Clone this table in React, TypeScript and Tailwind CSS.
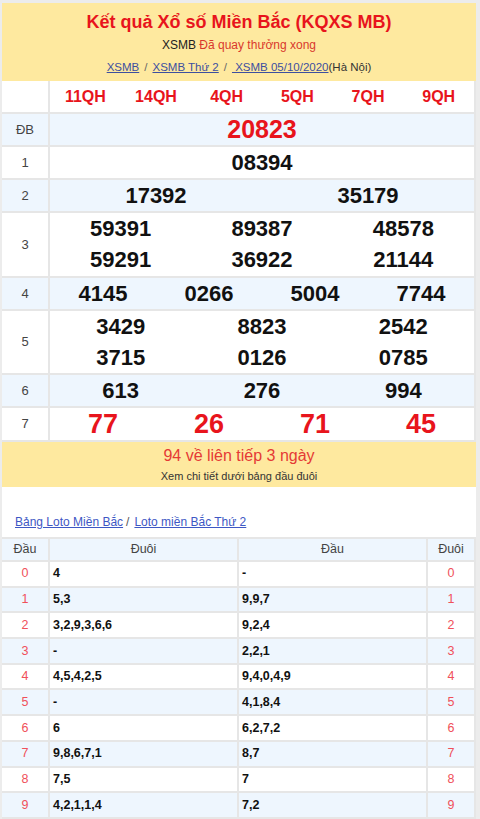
const font = { fontFamily: '"Liberation Sans", Arial, sans-serif' };

// ---------------------------------------------------------------------------
// Data
// ---------------------------------------------------------------------------

const provinces = ["11QH", "14QH", "4QH", "5QH", "7QH", "9QH"];

type Prize = { label: string; rows: string[][]; h: string; bg: string; kind?: "db" | "g7" };

const prizes: Prize[] = [
  { label: "ĐB", rows: [["20823"]], h: "h-[33px]", bg: "bg-[#eef6fe]", kind: "db" },
  { label: "1", rows: [["08394"]], h: "h-[33px]", bg: "bg-white" },
  { label: "2", rows: [["17392", "35179"]], h: "h-[33px]", bg: "bg-[#eef6fe]" },
  {
    label: "3",
    rows: [
      ["59391", "89387", "48578"],
      ["59291", "36922", "21144"],
    ],
    h: "h-[65px]",
    bg: "bg-white",
  },
  { label: "4", rows: [["4145", "0266", "5004", "7744"]], h: "h-[33px]", bg: "bg-[#eef6fe]" },
  {
    label: "5",
    rows: [
      ["3429", "8823", "2542"],
      ["3715", "0126", "0785"],
    ],
    h: "h-[64px]",
    bg: "bg-white",
  },
  { label: "6", rows: [["613", "276", "994"]], h: "h-[33px]", bg: "bg-[#eef6fe]" },
  { label: "7", rows: [["77", "26", "71", "45"]], h: "h-[34px]", bg: "bg-white", kind: "g7" },
];

const loto: [string, string, string][] = [
  ["0", "4", "-"],
  ["1", "5,3", "9,9,7"],
  ["2", "3,2,9,3,6,6", "9,2,4"],
  ["3", "-", "2,2,1"],
  ["4", "4,5,4,2,5", "9,4,0,4,9"],
  ["5", "-", "4,1,8,4"],
  ["6", "6", "6,2,7,2"],
  ["7", "9,8,6,7,1", "8,7"],
  ["8", "7,5", "7"],
  ["9", "4,2,1,1,4", "7,2"],
];

// ---------------------------------------------------------------------------
// Pieces
// ---------------------------------------------------------------------------

function PrizeRow({ prize }: { prize: Prize }) {
  const numClass =
    prize.kind === "db"
      ? "text-[25px] font-bold text-[#e8141c]"
      : prize.kind === "g7"
        ? "text-[27px] font-bold text-[#e8141c]"
        : "text-[22px] font-bold text-[#111]";
  return (
    <div className={`flex border-b-2 border-[#e6e6e6] ${prize.h} ${prize.bg}`}>
      <div className="flex w-[48px] shrink-0 items-center justify-center border-r-2 border-[#e6e6e6] text-[13px] text-[#444]">
        {prize.label}
      </div>
      <div className="flex flex-1 flex-col justify-center">
        {prize.rows.map((line, i) => (
          <div key={i} className="flex h-[31px] items-center">
            {line.map((n) => (
              <span key={n} className={`flex-1 text-center leading-none ${numClass}`}>
                {n}
              </span>
            ))}
          </div>
        ))}
      </div>
    </div>
  );
}

// ---------------------------------------------------------------------------
// App
// ---------------------------------------------------------------------------

export default function App() {
  return (
    <div className="min-h-[819px] bg-[#ececec] pl-[2px] pr-[4px] pt-[3px]" style={font}>
      <div className="bg-white">
        {/* Header */}
        <div className="flex h-[78px] flex-col items-center bg-[#fee99f]">
          <h1 className="mt-[7px] text-[18px] font-bold leading-[24px] text-[#e8141c]">
            Kết quả Xổ số Miền Bắc (KQXS MB)
          </h1>
          <p className="mt-[3px] text-[12px] leading-[16px] text-[#222]">
            XSMB <span className="text-[#d9382c]">Đã quay thưởng xong</span>
          </p>
          <p className="mt-[6px] text-[11.5px] leading-[16px] text-[#666]">
            <a className="text-[#3d4f9f] underline">XSMB</a>
            <span className="mx-[5px]">/</span>
            <a className="text-[#3d4f9f] underline">XSMB Thứ 2</a>
            <span className="mx-[5px]">/</span>
            <a className="text-[#3d4f9f] underline">&nbsp;XSMB 05/10/2020</a>
            <span className="text-[#333]">(Hà Nội)</span>
          </p>
        </div>

        {/* Results */}
        <div className="border-r-2 border-[#e6e6e6]">
          <div className="flex h-[33px] border-b-2 border-[#e6e6e6] bg-white">
            <div className="w-[48px] shrink-0 border-r-2 border-[#e6e6e6]" />
            <div className="flex flex-1 items-center">
              {provinces.map((p) => (
                <span key={p} className="flex-1 text-center text-[16px] font-bold text-[#e8141c]">
                  {p}
                </span>
              ))}
            </div>
          </div>
          {prizes.map((p) => (
            <PrizeRow key={p.label} prize={p} />
          ))}
        </div>

        {/* Note */}
        <div className="flex h-[45px] flex-col items-center bg-[#fee99f]">
          <p className="mt-[4px] text-[16px] leading-[20px] text-[#e53a35]">94 về liên tiếp 3 ngày</p>
          <p className="mt-[3px] text-[11px] leading-[14px] text-[#333]">
            Xem chi tiết dưới bảng đầu đuôi
          </p>
        </div>

        {/* Loto links */}
        <div className="flex h-[50px] items-end pb-[6px] pl-[13px] text-[12px] text-[#555]">
          <a className="text-[#3d57c4] underline">Bảng Loto Miền Bắc</a>
          <span className="mx-[3px]">/</span>
          <a className="ml-[2px] text-[#3d57c4] underline">Loto miền Bắc Thứ 2</a>
        </div>

        {/* Loto table */}
        <div className="border-r-2 border-t-2 border-[#e6e6e6] text-[12.5px]">
          <div className="flex h-[23px] items-center border-b-2 border-[#e6e6e6] bg-[#eef6fe] text-[#444]">
            <div className="flex h-full w-[48px] items-center justify-center border-r-2 border-[#e6e6e6]">Đầu</div>
            <div className="flex h-full w-[189px] items-center justify-center border-r-2 border-[#e6e6e6]">Đuôi</div>
            <div className="flex h-full w-[189px] items-center justify-center border-r-2 border-[#e6e6e6]">Đầu</div>
            <div className="flex h-full flex-1 items-center justify-center">Đuôi</div>
          </div>
          {loto.map(([d, tail, head], i) => (
            <div
              key={d}
              className={`flex h-[25.7px] items-center border-b-2 border-[#e6e6e6] ${
                i % 2 === 1 ? "bg-[#eef6fe]" : "bg-white"
              }`}
            >
              <div className="flex h-full w-[48px] items-center justify-center border-r-2 border-[#e6e6e6] text-[#f0505a]">
                {d}
              </div>
              <div className="flex h-full w-[189px] items-center border-r-2 border-[#e6e6e6] pl-[3px] font-bold text-[#111]">
                {tail}
              </div>
              <div className="flex h-full w-[189px] items-center border-r-2 border-[#e6e6e6] pl-[3px] font-bold text-[#111]">
                {head}
              </div>
              <div className="flex h-full flex-1 items-center justify-center text-[#f0505a]">{d}</div>
            </div>
          ))}
        </div>
      </div>
    </div>
  );
}
